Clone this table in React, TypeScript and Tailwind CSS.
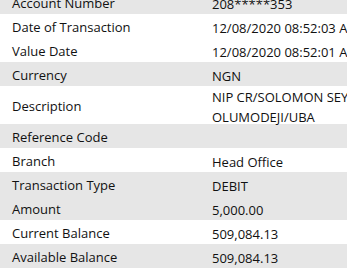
import React from "react";

interface Row {
	label: string;
	value: React.ReactNode;
	shaded: boolean;
	tall?: boolean;
}

const rows: Row[] = [
	{ label: "Account Number", value: "208*****353", shaded: true },
	{ label: "Date of Transaction", value: "12/08/2020 08:52:03 AM", shaded: false },
	{ label: "Value Date", value: "12/08/2020 08:52:01 AM", shaded: false },
	{ label: "Currency", value: "NGN", shaded: true },
	{
		label: "Description",
		value: (
			<>
				NIP CR/SOLOMON SEYI
				<br />
				OLUMODEJI/UBA
			</>
		),
		shaded: false,
		tall: true,
	},
	{ label: "Reference Code", value: "", shaded: true },
	{ label: "Branch", value: "Head Office", shaded: false },
	{ label: "Transaction Type", value: "DEBIT", shaded: true },
	{ label: "Amount", value: "5,000.00", shaded: true },
	{ label: "Current Balance", value: "509,084.13", shaded: false },
	{ label: "Available Balance", value: "509,084.13", shaded: true },
];

const App: React.FC = () => {
	return (
		<div
			className="w-[347px] h-[278px] overflow-hidden bg-white text-[13px] text-[#111111]"
			style={{ fontFamily: '"Open Sans", "Liberation Sans", sans-serif' }}
		>
			<div className="-mt-[10px]">
				{rows.map((row) => (
					<div
						key={row.label}
						className={`flex items-center whitespace-nowrap pt-1 ${
							row.tall ? "h-[38px]" : "h-6"
						} ${row.shaded ? "bg-[#e6e6e6]" : "bg-white"}`}
					>
						<div className="w-[212px] shrink-0 pl-3">{row.label}</div>
						<div className="leading-5">{row.value}</div>
					</div>
				))}
			</div>
		</div>
	);
};

export default App;
